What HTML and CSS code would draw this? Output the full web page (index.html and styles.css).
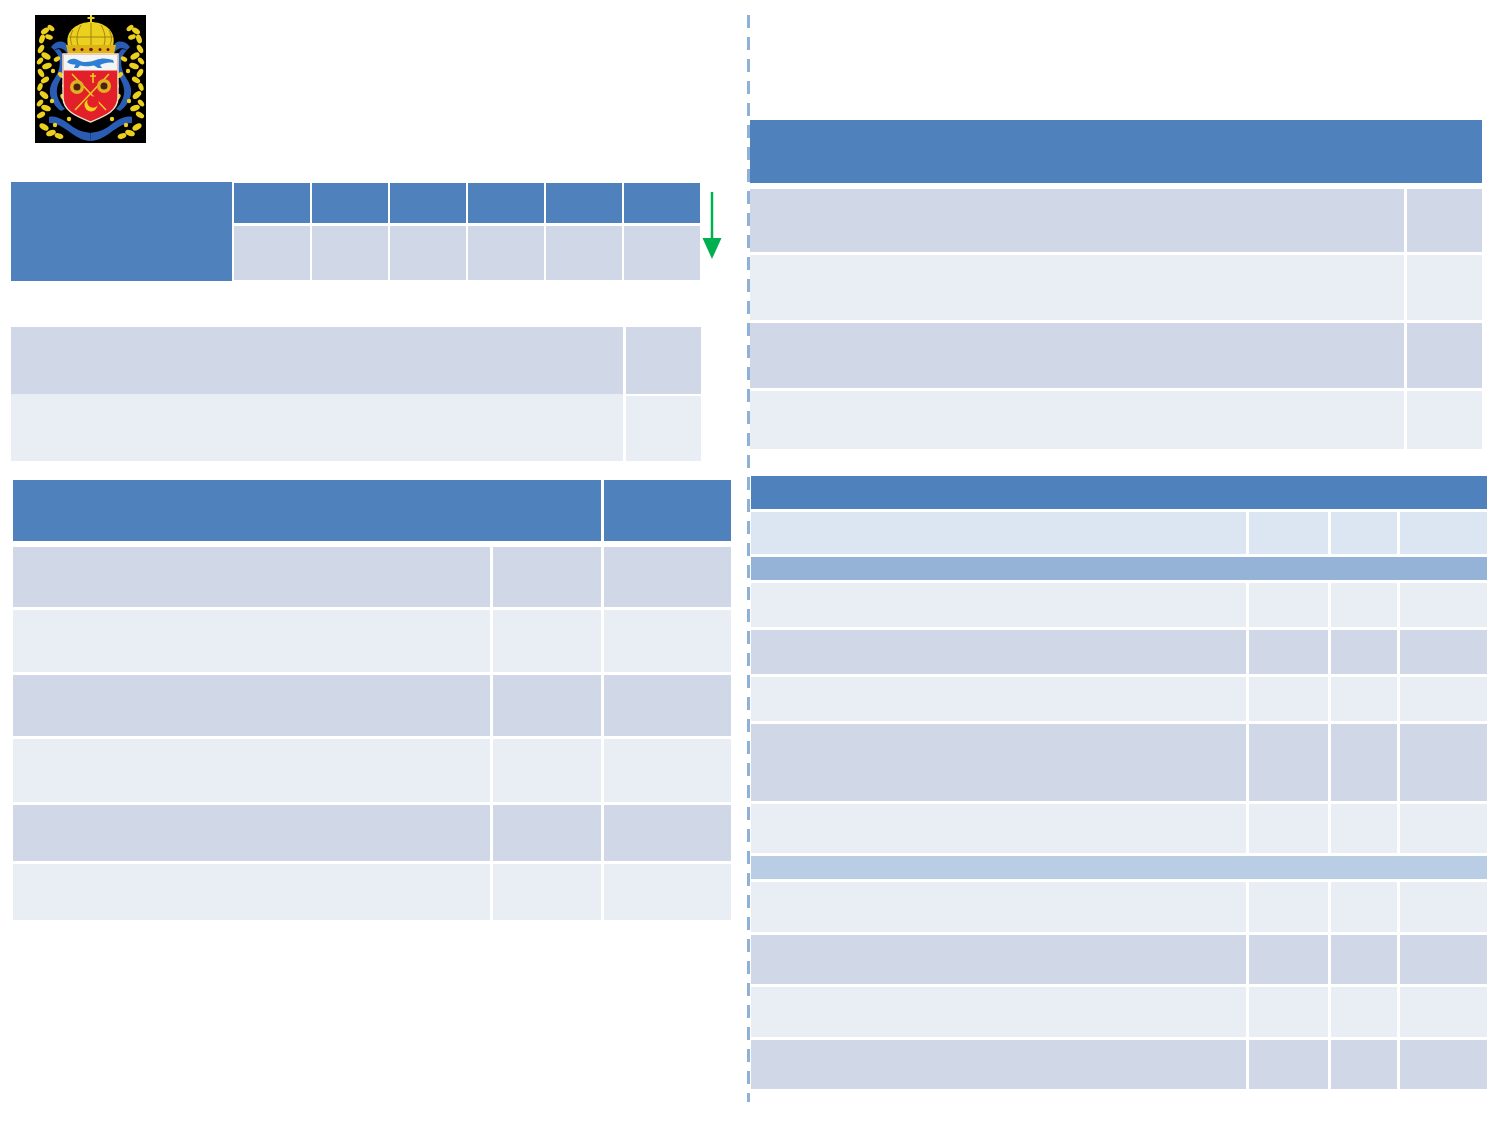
FILE: index.html
```html
<!DOCTYPE html>
<html lang="ru">
<head>
<meta charset="utf-8">
<title>Слайд</title>
<link rel="stylesheet" href="styles.css">
</head>
<body>
<div class="page">
  <div class="left">
    <div class="logo">
      <svg viewBox="0 0 111 128" width="111" height="128">
        <defs>
          <g id="half">
            <!-- blue ribbon -->
            <g fill="#2a5cb4">
              <path d="M16 32 C22 24 32 25 34 34 L33 40 C30 34 25 31 19 35 Z"/>
              <path d="M19 35 C24 40 26 46 24 54 C22 62 16 66 15 74 C14 82 18 90 26 96 L30 94 C24 88 21 80 22 74 C23 66 29 60 30 52 C31 44 28 38 24 34 Z"/>
              <path d="M14 102 C22 100 30 106 38 112 C44 116 50 117 55.5 118 L55.5 126 C48 126 42 122 36 118 C28 112 22 108 14 108 Z"/>
            </g>
            <!-- oak leaves -->
            <g fill="#ecd01e">
              <ellipse cx="10" cy="16" rx="4.5" ry="2.6" transform="rotate(-35 10 16)"/>
              <ellipse cx="16" cy="13" rx="4" ry="2.4" transform="rotate(40 16 13)"/>
              <ellipse cx="7" cy="24" rx="4.5" ry="2.6" transform="rotate(-70 7 24)"/>
              <ellipse cx="14" cy="22" rx="4" ry="2.4" transform="rotate(20 14 22)"/>
              <ellipse cx="6" cy="34" rx="4.5" ry="2.6" transform="rotate(-60 6 34)"/>
              <ellipse cx="11" cy="41" rx="5" ry="2.8" transform="rotate(30 11 41)"/>
              <ellipse cx="5" cy="46" rx="4" ry="2.4" transform="rotate(-50 5 46)"/>
              <ellipse cx="12" cy="51" rx="5" ry="2.8" transform="rotate(-20 12 51)"/>
              <ellipse cx="6" cy="58" rx="4.5" ry="2.6" transform="rotate(60 6 58)"/>
              <ellipse cx="10" cy="65" rx="4.5" ry="2.6" transform="rotate(-30 10 65)"/>
              <ellipse cx="5" cy="72" rx="4" ry="2.4" transform="rotate(-70 5 72)"/>
              <ellipse cx="9" cy="80" rx="5" ry="2.8" transform="rotate(40 9 80)"/>
              <ellipse cx="5" cy="88" rx="4" ry="2.4" transform="rotate(-50 5 88)"/>
              <ellipse cx="11" cy="93" rx="5" ry="2.8" transform="rotate(20 11 93)"/>
              <ellipse cx="6" cy="100" rx="4.5" ry="2.6" transform="rotate(-30 6 100)"/>
              <ellipse cx="9" cy="112" rx="5" ry="2.8" transform="rotate(30 9 112)"/>
              <ellipse cx="16" cy="118" rx="5" ry="2.8" transform="rotate(-20 16 118)"/>
              <ellipse cx="24" cy="121" rx="4.5" ry="2.6" transform="rotate(20 24 121)"/>
              <ellipse cx="30" cy="70" rx="3.5" ry="2.2" transform="rotate(-50 30 70)"/>
              <ellipse cx="26" cy="60" rx="3.5" ry="2.2" transform="rotate(40 26 60)"/>
              <ellipse cx="28" cy="82" rx="3.5" ry="2.2" transform="rotate(60 28 82)"/>
              <ellipse cx="22" cy="44" rx="3.5" ry="2.2" transform="rotate(-30 22 44)"/>
              <circle cx="18" cy="56" r="2.2"/>
              <circle cx="17" cy="86" r="2.2"/>
              <circle cx="20" cy="110" r="2.2"/>
              <circle cx="34" cy="104" r="2.2"/>
            </g>
          </g>
        </defs>
        <rect width="111" height="128" fill="#000"/>
        <use href="#half"/>
        <use href="#half" transform="translate(111 0) scale(-1 1)"/>
        <!-- crown -->
        <path d="M33 31 C29 15 44 7 56 7 C68 7 82 15 78 31 Z" fill="#ecd01e"/>
        <g stroke="#9a7a10" stroke-width="0.9" fill="none">
          <path d="M56 8 V30"/>
          <path d="M46 10 C42 17 41 24 43 30"/>
          <path d="M66 10 C70 17 71 24 69 30"/>
          <path d="M38 15 C35 20 35 26 37 30"/>
          <path d="M74 15 C77 20 77 26 75 30"/>
          <path d="M34 22 H78"/>
        </g>
        <path d="M31 30 H81 L79 39 H33 Z" fill="#dcb418"/>
        <g fill="#7a1010">
          <circle cx="39" cy="34.5" r="1.5"/>
          <circle cx="47" cy="34.5" r="1.5"/>
          <circle cx="56" cy="34.5" r="1.8"/>
          <circle cx="65" cy="34.5" r="1.5"/>
          <circle cx="73" cy="34.5" r="1.5"/>
        </g>
        <rect x="55" y="0" width="2" height="8" fill="#ecd01e"/>
        <rect x="52.5" y="2" width="7" height="2" fill="#ecd01e"/>
        <!-- shield -->
        <path d="M28 39 H83 V82 C83 96 70 101 55.5 107 C41 101 28 96 28 82 Z" fill="#e3202a" stroke="#efe6c8" stroke-width="1.4"/>
        <rect x="28.7" y="39.7" width="53.6" height="15.8" fill="#f3f4f4"/>
        <path d="M32 47 C35 43 40 43 44 45.5 C49 48 55 47 61 45 C66 43 72 43 78 45 L79 48 C74 47 69 48 65 50 L67 53 L63 53 L59 50.5 C55 51.5 49 51.5 45 50.5 L43 53 L39 53 L40.5 49.5 C37 49.5 34 49 32 47 Z" fill="#2f80d4"/>
        <!-- crossed staffs -->
        <g stroke="#ecd01e" stroke-width="1.5">
          <line x1="37" y1="59" x2="71" y2="95"/>
          <line x1="74" y1="59" x2="40" y2="95"/>
          <line x1="58" y1="58" x2="58" y2="68"/>
          <line x1="55" y1="61" x2="61" y2="61"/>
        </g>
        <g fill="#e0b020">
          <circle cx="42" cy="72" r="7"/>
          <circle cx="69" cy="71" r="7"/>
        </g>
        <g fill="#4a2410">
          <circle cx="42" cy="72" r="3.5"/>
          <circle cx="69" cy="71" r="3.5"/>
        </g>
        <circle cx="56" cy="90" r="6.5" fill="#f2d21a"/>
        <circle cx="58" cy="87" r="5.8" fill="#e3202a"/>
      </svg>
    </div>

    <div class="top-row">
      <div class="grid t1">
        <div class="c blue merged"></div>
        <div class="c blue"></div><div class="c blue"></div><div class="c blue"></div>
        <div class="c blue"></div><div class="c blue"></div><div class="c blue"></div>
        <div class="c dark"></div><div class="c dark"></div><div class="c dark"></div>
        <div class="c dark"></div><div class="c dark"></div><div class="c dark"></div>
      </div>
      <svg class="arrow" viewBox="0 0 20 68" width="20" height="68">
        <line x1="10" y1="0" x2="10" y2="50" stroke="#00b050" stroke-width="2.5"/>
        <polygon points="0.5,46 19.5,46 10,67" fill="#00b050"/>
      </svg>
    </div>

    <div class="grid t2">
      <div class="c dark"></div><div class="c dark"></div>
      <div class="c light"></div><div class="c light gap-top"></div>
    </div>

    <div class="grid t3">
      <div class="c blue span2"></div><div class="c blue"></div>
      <div class="c dark"></div><div class="c dark"></div><div class="c dark"></div>
      <div class="c light"></div><div class="c light"></div><div class="c light"></div>
      <div class="c dark"></div><div class="c dark"></div><div class="c dark"></div>
      <div class="c light"></div><div class="c light"></div><div class="c light"></div>
      <div class="c dark"></div><div class="c dark"></div><div class="c dark"></div>
      <div class="c light"></div><div class="c light"></div><div class="c light"></div>
    </div>
  </div>

  <div class="divider"></div>

  <div class="right">
    <div class="grid t4">
      <div class="c blue span2"></div>
      <div class="c dark"></div><div class="c dark"></div>
      <div class="c light"></div><div class="c light"></div>
      <div class="c dark"></div><div class="c dark"></div>
      <div class="c light"></div><div class="c light"></div>
    </div>

    <div class="grid t5">
      <div class="c blue span4"></div>
      <div class="c pale"></div><div class="c pale"></div><div class="c pale"></div><div class="c pale"></div>
      <div class="c band1 span4"></div>
      <div class="c light"></div><div class="c light"></div><div class="c light"></div><div class="c light"></div>
      <div class="c dark"></div><div class="c dark"></div><div class="c dark"></div><div class="c dark"></div>
      <div class="c light"></div><div class="c light"></div><div class="c light"></div><div class="c light"></div>
      <div class="c dark"></div><div class="c dark"></div><div class="c dark"></div><div class="c dark"></div>
      <div class="c light"></div><div class="c light"></div><div class="c light"></div><div class="c light"></div>
      <div class="c band2 span4"></div>
      <div class="c light"></div><div class="c light"></div><div class="c light"></div><div class="c light"></div>
      <div class="c dark"></div><div class="c dark"></div><div class="c dark"></div><div class="c dark"></div>
      <div class="c light"></div><div class="c light"></div><div class="c light"></div><div class="c light"></div>
      <div class="c dark"></div><div class="c dark"></div><div class="c dark"></div><div class="c dark"></div>
    </div>
  </div>
</div>
</body>
</html>
```

FILE: styles.css
```css
html, body {
  margin: 0;
  padding: 0;
  background: #ffffff;
  font-family: "Liberation Sans", Arial, sans-serif;
}

.page {
  width: 1500px;
  height: 1125px;
  display: flex;
  align-items: flex-start;
}

.left {
  width: 736px;
  padding-left: 11px;
  display: flex;
  flex-direction: column;
  align-items: flex-start;
}

.logo {
  margin-left: 24px;
  margin-top: 15px;
  width: 111px;
  height: 128px;
}

.logo svg {
  display: block;
}

.divider {
  width: 3px;
  margin-top: 15px;
  height: 1087px;
  background: repeating-linear-gradient(to bottom, #8fb1d6 0 13px, transparent 13px 22px);
}

.right {
  flex: 1;
  display: flex;
  flex-direction: column;
  align-items: flex-start;
}

.grid {
  display: grid;
}

.c.blue { background: #4f81bd; }
.c.dark { background: #d0d8e8; }
.c.light { background: #e9edf4; }
.c.pale { background: #dce6f2; }
.c.band1 { background: #95b3d7; }
.c.band2 { background: #b9cde5; }

.span2 { grid-column: span 2; }
.span4 { grid-column: span 4; }

/* top-left table with arrow */
.top-row {
  margin-top: 40px;
  display: flex;
  align-items: flex-start;
}

.t1 {
  grid-template-columns: 221px repeat(6, 76px);
  grid-template-rows: 40px 54px;
  column-gap: 2px;
  row-gap: 3px;
}

.t1 .merged {
  grid-row: span 2;
  margin-top: -1px;
  margin-bottom: -1px;
}

.arrow {
  display: block;
  margin-left: 2px;
  margin-top: 9px;
}

/* middle-left table */
.t2 {
  margin-top: 47px;
  grid-template-columns: 612px 75px;
  grid-template-rows: 67px 67px;
  column-gap: 3px;
}

.t2 .gap-top {
  border-top: 2px solid #ffffff;
}

/* bottom-left table */
.t3 {
  margin-top: 19px;
  margin-left: 2px;
  grid-template-columns: 477px 108px 127px;
  grid-template-rows: 64px 60px 62px 61px 63px 56px 56px;
  column-gap: 3px;
  row-gap: 3px;
}

.t3 > .blue {
  margin-bottom: 3px;
}

/* top-right table */
.t4 {
  margin-top: 120px;
  grid-template-columns: 654px 75px;
  grid-template-rows: 66px 63px 65px 65px 58px;
  column-gap: 3px;
  row-gap: 3px;
}

.t4 > .blue {
  margin-bottom: 3px;
}

/* bottom-right table */
.t5 {
  margin-top: 27px;
  margin-left: 1px;
  grid-template-columns: 495px 79px 66px 87px;
  grid-template-rows: 33px 42px 23px 44px 44px 44px 77px 49px 23px 50px 49px 50px 49px;
  column-gap: 3px;
  row-gap: 3px;
}
```
